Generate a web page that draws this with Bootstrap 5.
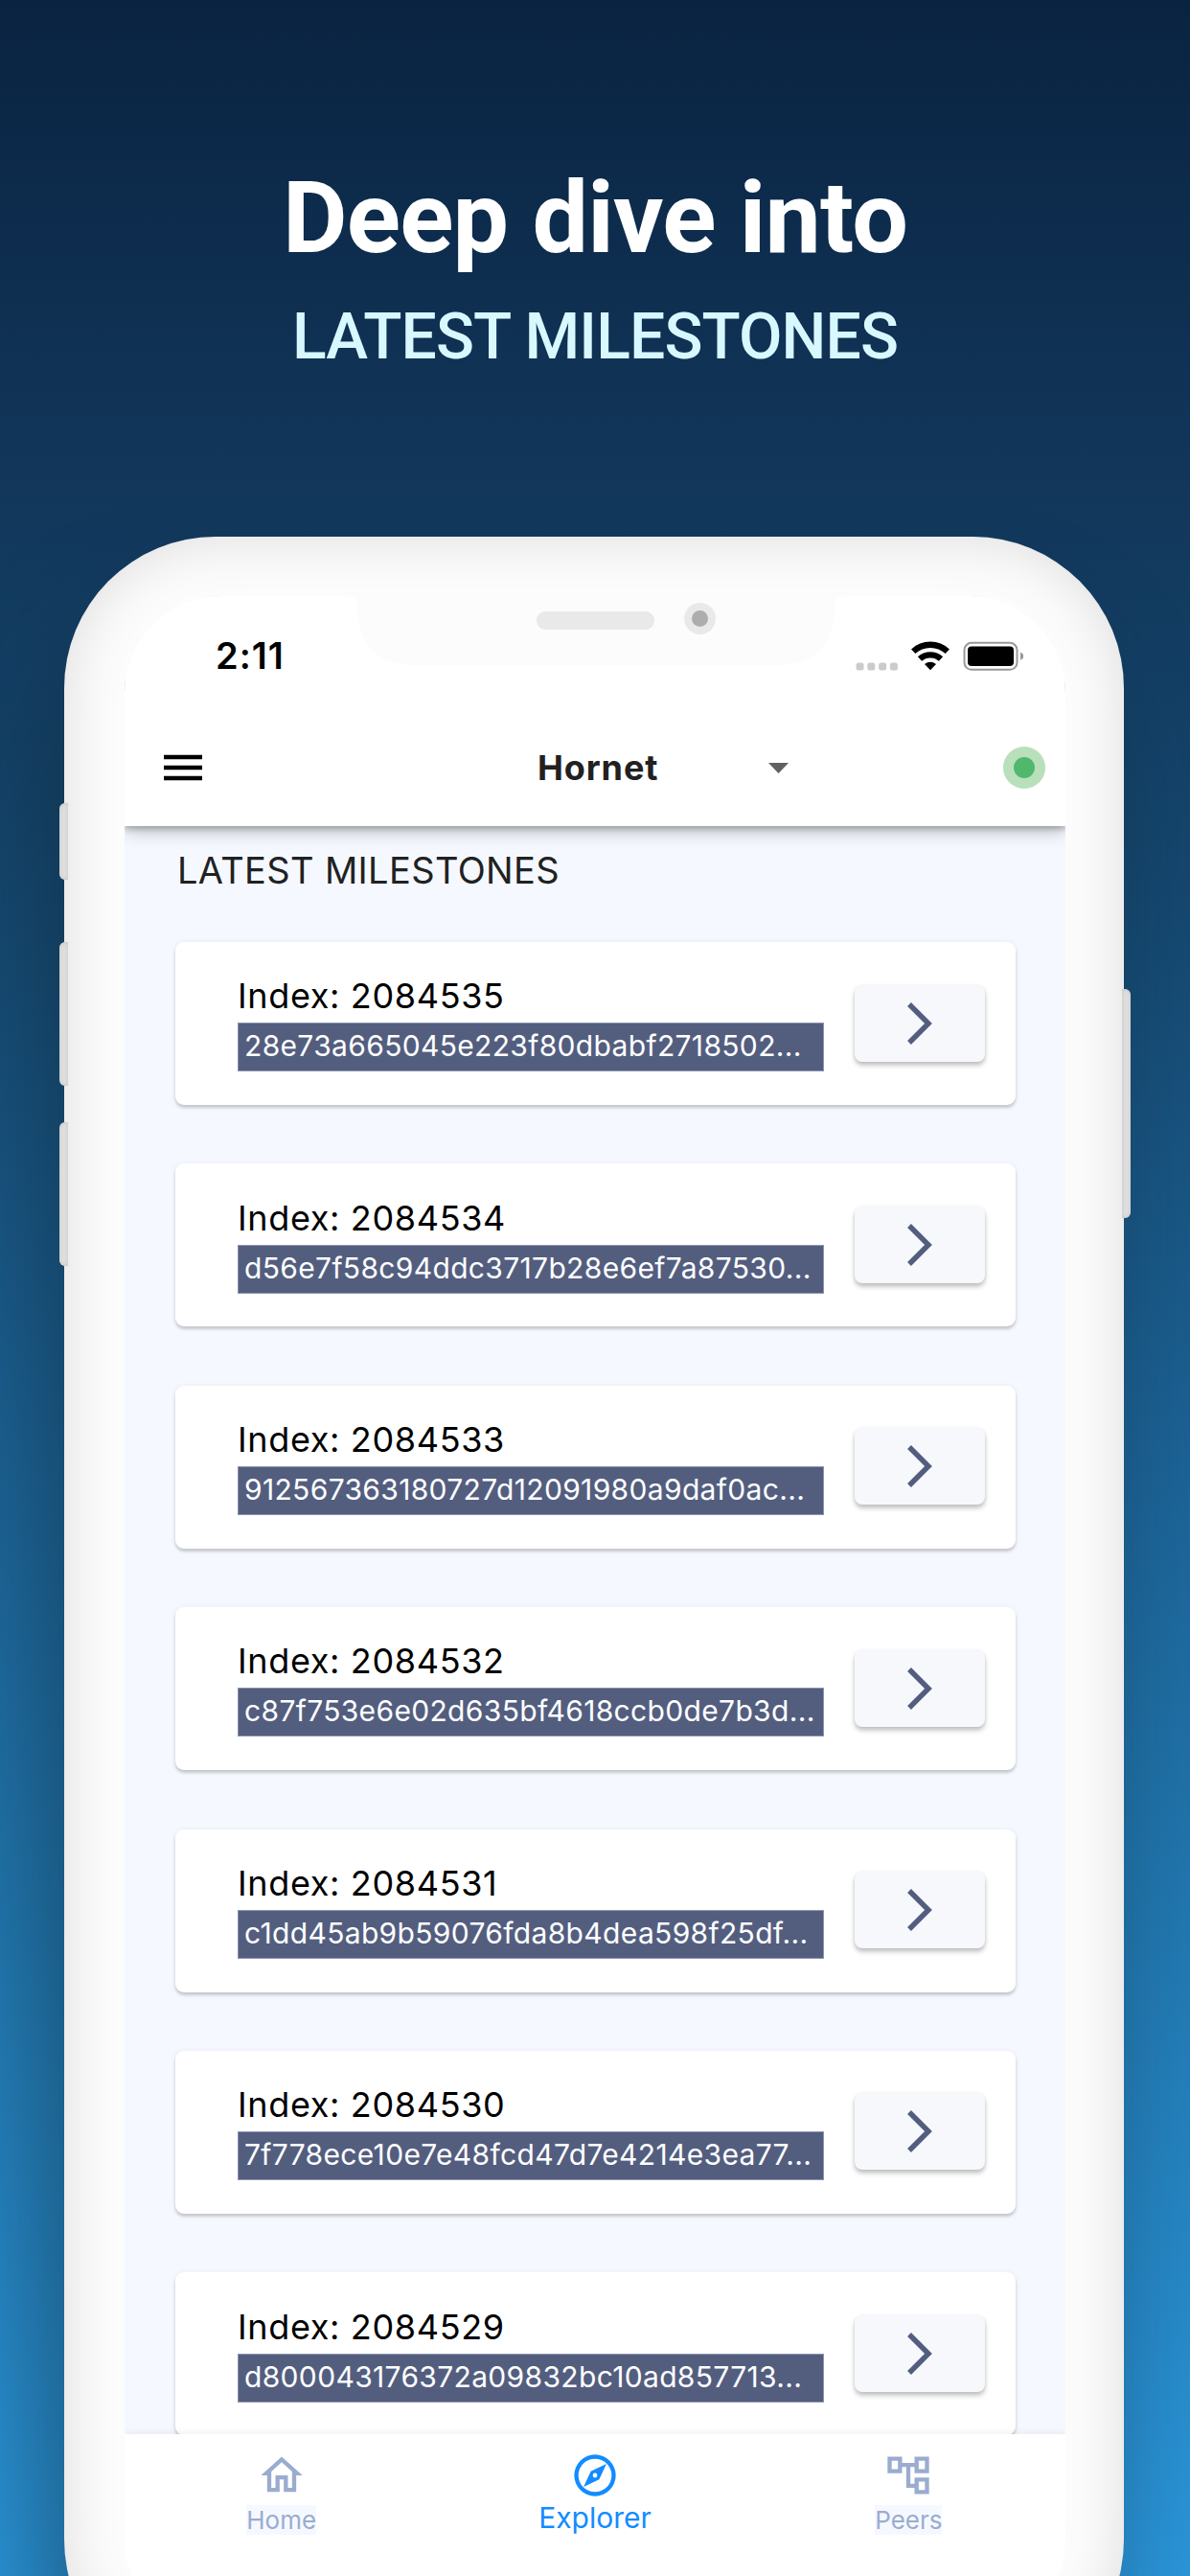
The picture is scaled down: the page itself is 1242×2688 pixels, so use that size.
<!DOCTYPE html>
<html lang="en">
<head>
<meta charset="utf-8">
<meta name="viewport" content="width=device-width, initial-scale=1">
<title>Latest Milestones</title>
<link href="https://cdn.jsdelivr.net/npm/bootstrap@5.3.0/dist/css/bootstrap.min.css" rel="stylesheet">
<style>
html, body { height: 2688px; overflow: hidden; }
body { font-family: Inter, "Liberation Sans", sans-serif; background: #0a2341; }
.stage { width: 1242px; height: 2688px; background: linear-gradient(180deg, #0a2341 0%, #12385c 20%, #164a73 37%, #1c6295 56%, #2279b2 75%, #2b96da 100%); }
.headline { height: 560px; padding-top: 167px; font-family: Roboto, sans-serif; }
.headline h1 { font-size: 104px; line-height: 122px; font-weight: 700; letter-spacing: -.75px; }
.headline h2 { font-size: 66px; line-height: 78px; font-weight: 500; letter-spacing: -.85px; color: #d8f8ff; margin-top: 24px; }
.phone { width: 1106px; height: 2248px; margin-left: 67px; padding: 62px 61px 0 63px; border-radius: 158px; background: #fcfcfc; box-shadow: inset 0 0 60px rgba(0,0,0,.13), -24px 90px 110px rgba(14,40,56,.5); }
.side-key { width: 9px; background: #dfdfdf; box-shadow: inset 0 0 4px #c4c4c4; }
.key-l { left: -5px; border-radius: 6px 0 0 6px; }
.key-r { right: -7px; border-radius: 0 6px 6px 0; }
.key-a { top: 278px; height: 80px; }
.key-b { top: 423px; height: 150px; }
.key-c { top: 611px; height: 150px; }
.key-d { top: 472px; height: 239px; }
.screen { height: 2129px; border-radius: 102px; background: #fff; }
.notch { left: 232px; top: -1px; }
.topbar { height: 240px; z-index: 2; box-shadow: 0 3px 6px rgba(0,0,0,.24), 0 5px 18px rgba(0,0,0,.24); }
.statusbar { height: 110px; padding: 39px 44px 0 95px; }
.clock { font-size: 38px; font-weight: 600; line-height: 46px; color: #000; letter-spacing: 1px; }
.appbar { height: 130px; padding: 8px 21px 0 40px; }
.node-pick { width: 262px; margin-left: 349px; }
.node-name { font-size: 36px; font-weight: 700; color: #212121; letter-spacing: .9px; }
.feed { height: 1678px; background: #f5f9ff; padding: 23px 52px 0 53px; }
.feed-title { font-size: 38px; font-weight: 400; line-height: 46px; color: #212121; letter-spacing: .35px; margin: 0 0 52px 2px; }
.milestone { height: 170px; flex: none; margin-bottom: 61.4px; border: 0; border-radius: 9px; padding: 0 32px 0 65px; box-shadow: 0 3px 3px rgba(0,0,0,.16), 0 1px 6px rgba(0,0,0,.08); }
.m-index { font-size: 36px; line-height: 44px; color: #000; letter-spacing: .65px; }
.m-hash { width: 612px; height: 51px; line-height: 46px; font-size: 30px; letter-spacing: .34px; background: #535e7f; border: 1px solid #8d94b0; color: #fff; padding-left: 6px; margin: 6px 0 .6px; white-space: nowrap; }
.go { width: 136px; height: 80px; margin-bottom: 1px; border-radius: 8px; background: #f6f8fc; border: 0; box-shadow: 0 4px 5px rgba(0,0,0,.2), 0 1px 4px rgba(0,0,0,.1); }
.tabbar { height: 148px; z-index: 2; background: #fff; box-shadow: 0 -1px 8px rgba(0,0,0,.07); padding-top: 17px; color: #9aaccf; }
.tab { flex: 1 1 0; }
.tab-label { font-size: 26px; line-height: 31px; background: #f5f9ff; margin-top: 5px; }
.tab-current { font-size: 30px; line-height: 36px; color: #128cff; }
svg { display: block; }
</style>
</head>
<body>
<div class="stage overflow-hidden">
  <header class="headline text-center text-white">
    <h1 class="mb-0">Deep dive into</h1>
    <h2 class="mb-0">LATEST MILESTONES</h2>
  </header>
  <main class="phone position-relative">
    <i class="side-key key-l key-a position-absolute"></i><i class="side-key key-l key-b position-absolute"></i><i class="side-key key-l key-c position-absolute"></i><i class="side-key key-r key-d position-absolute"></i>
    <div class="screen position-relative overflow-hidden d-flex flex-column">
      <div class="topbar bg-white position-relative flex-shrink-0">
        <svg class="notch position-absolute" width="520" height="74" viewBox="0 0 520 74"><path d="M0 0H520V1Q509 1 509 12C509 50 490 73 450 73H70C30 73 11 50 11 12Q11 1 0 1Z" fill="#fcfcfc"/><rect x="198" y="17" width="123" height="19" rx="9" fill="#e9e9e9"/><circle cx="368.500" cy="24.500" r="16.500" fill="#e9e9e9"/><circle cx="368.500" cy="24.500" r="8.500" fill="#adadad"/></svg>
        <div class="statusbar d-flex justify-content-between">
          <span class="clock">2:11</span>
          <svg width="178" height="40" viewBox="888 660 178 40"><g fill="#cbcbcb"><rect x="891.500" y="690.500" width="8" height="8" rx="2.500"/><rect x="903.300" y="690.500" width="8" height="8" rx="2.500"/><rect x="915.100" y="690.500" width="8" height="8" rx="2.500"/><rect x="926.900" y="690.500" width="8" height="8" rx="2.500"/></g><g fill="none" stroke="#000" stroke-width="6.300"><path d="M951.200 678.800A26 26 0 0 1 986.800 678.800"/><path d="M958 686.500A16.500 16.500 0 0 1 980 686.500"/></g><path d="M963 692Q969 687.500 975 692L969 698.300Z"/><rect x="1004.500" y="669.800" width="55" height="28" rx="7.500" fill="none" stroke="#999" stroke-width="2"/><rect x="1008" y="673.500" width="48" height="20.500" rx="4"/><path d="M1063 679.500Q1070 683.700 1063 688Z" fill="#999"/></svg>
        </div>
        <nav class="appbar d-flex align-items-center">
          <svg width="42" height="28" viewBox="0 0 42 28"><path d="M1 3H41M1 14H41M1 25H41" stroke="#000" stroke-width="4.600"/></svg>
          <div class="d-flex align-items-center justify-content-between node-pick me-auto"><span class="node-name">Hornet</span><svg width="21" height="11" viewBox="0 0 21 11"><path d="M0 0H21L10.500 11Z" fill="#616161"/></svg></div>
          <svg width="44" height="44" viewBox="0 0 44 44"><circle cx="22" cy="22" r="22" fill="#b9e0ba"/><circle cx="22" cy="22" r="11" fill="#50b86c"/></svg>
        </nav>
      </div>
      <section class="feed overflow-hidden flex-shrink-0 d-flex flex-column" id="feed">
        <p class="feed-title">LATEST MILESTONES</p>
      </section>
      <footer class="tabbar d-flex position-relative flex-shrink-0">
        <div class="tab d-flex flex-column align-items-center"><svg width="52" height="52" viewBox="0 0 24 24" fill="currentColor"><path d="M12 5.690l5 4.500V18h-2v-6H9v6H7v-7.810l5-4.500M12 3L2 12h3v8h6v-6h2v6h6v-8h3L12 3z"/></svg><span class="tab-label">Home</span></div>
        <div class="tab d-flex flex-column align-items-center"><svg width="52" height="52" viewBox="0 0 24 24" fill="#128cff"><path d="M12 2a10 10 0 1 0 0 20a10 10 0 1 0 0-20zm0 18a8 8 0 1 1 0-16a8 8 0 1 1 0 16zm-5.500-2.500l7.510-3.490L17.500 6.500 9.990 9.990 6.500 17.500zM12 10.900a1.100 1.100 0 1 1 0 2.200a1.100 1.100 0 1 1 0-2.200z"/></svg><span class="tab-current">Explorer</span></div>
        <div class="tab d-flex flex-column align-items-center"><svg width="52" height="52" viewBox="0 0 24 24" fill="currentColor"><path d="M22 11V3h-7v3H9V3H2v8h7V8h2v10h4v3h7v-8h-7v3h-2V8h2v3h7zM7 9H4V5h3v4zm10 6h3v4h-3v-4zm0-10h3v4h-3V5z" fill-rule="evenodd"/></svg><span class="tab-label">Peers</span></div>
      </footer>
    </div>
  </main>
</div>
<script src="https://cdn.jsdelivr.net/npm/bootstrap@5.3.0/dist/js/bootstrap.bundle.min.js"></script>
<script>
const milestones = [
  [2084535, "28e73a665045e223f80dbabf2718502..."],
  [2084534, "d56e7f58c94ddc3717b28e6ef7a87530..."],
  [2084533, "912567363180727d12091980a9daf0ac..."],
  [2084532, "c87f753e6e02d635bf4618ccb0de7b3d..."],
  [2084531, "c1dd45ab9b59076fda8b4dea598f25df..."],
  [2084530, "7f778ece10e7e48fcd47d7e4214e3ea77..."],
  [2084529, "d800043176372a09832bc10ad857713..."]
];
document.getElementById("feed").insertAdjacentHTML("beforeend", milestones.map(([index, hash]) => `
<article class="card milestone flex-row align-items-center justify-content-between">
  <div><div class="m-index">Index: ${index}</div><div class="m-hash">${hash}</div></div>
  <button class="btn go d-flex align-items-center justify-content-center p-0" aria-label="Open"><svg width="28" height="44" viewBox="0 0 28 44"><path d="M3 2L23 22L3 42" fill="none" stroke="#535e7f" stroke-width="5.500"/></svg></button>
</article>`).join(""));
</script>
</body>
</html>
